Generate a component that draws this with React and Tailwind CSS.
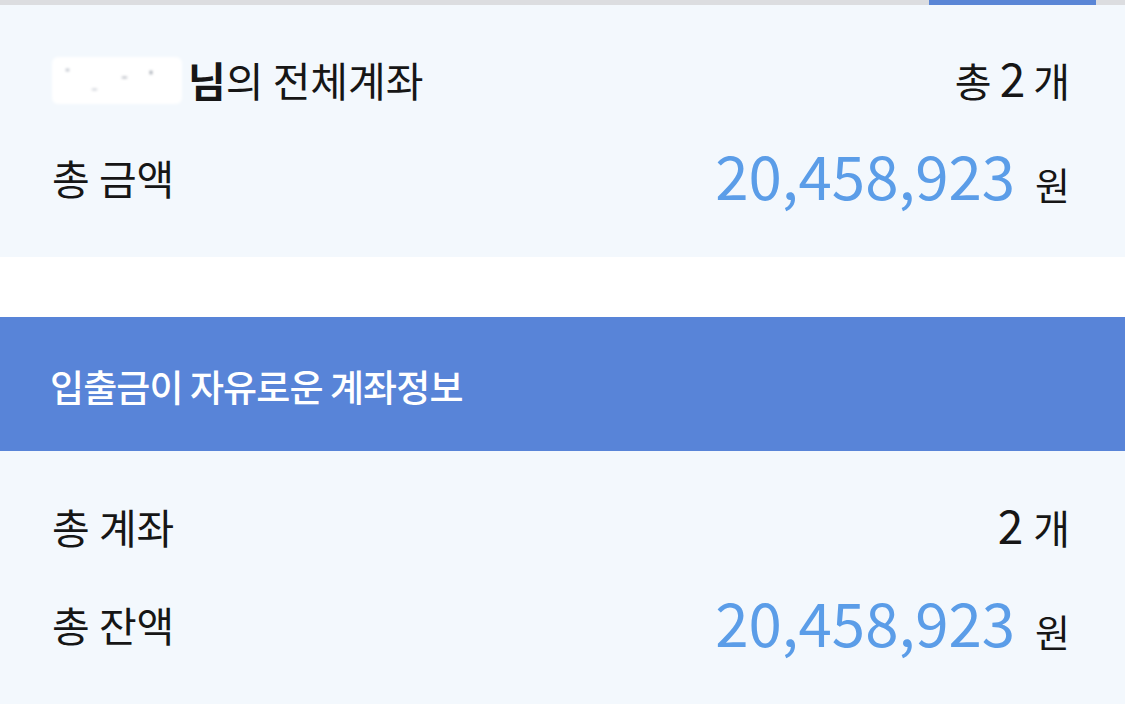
export default function App() {
  const font = { fontFamily: '"Noto Sans CJK KR", "Noto Sans", sans-serif' };
  return (
    <div className="w-[1125px] h-[721px] bg-white text-[#161616]" style={font}>
      <div className="h-[5px] bg-[#dcdde0] flex">
        <div className="ml-auto mr-[29px] w-[167px] h-[5px] bg-[#5a86d6]" />
      </div>
      <section className="h-[252px] bg-[#f3f8fd] pt-[40px] pl-[52px] pr-[55px] flex flex-col gap-[28px]">
        <div className="h-[70px] flex items-center justify-between">
          <div className="flex items-center text-[41px]">
            <div className="w-[130px] h-[47px] bg-white rounded-[6px] blur-[1.5px] mr-[6px] relative">
              <span className="absolute left-[14px] top-[12px] w-[3px] h-[2px] bg-gray-400" />
              <span className="absolute left-[70px] top-[20px] w-[5px] h-[1px] bg-gray-500" />
              <span className="absolute left-[40px] top-[32px] w-[5px] h-[1px] bg-gray-400" />
              <span className="absolute left-[98px] top-[14px] w-[2px] h-[3px] bg-gray-500" />
            </div>
            <span className="font-bold">님</span>
            <span>의 전체계좌</span>
          </div>
          <div className="flex items-baseline gap-[8px]">
            <span className="text-[40px]">총</span>
            <span className="text-[46px] leading-none">2</span>
            <span className="text-[40px]">개</span>
          </div>
        </div>
        <div className="h-[70px] flex items-center justify-between">
          <span className="text-[41px]">총 금액</span>
          <div className="flex items-baseline gap-[20px]">
            <span className="text-[60px] leading-none text-[#5b9de8]">20,458,923</span>
            <span className="text-[38px]">원</span>
          </div>
        </div>
      </section>
      <div className="h-[60px] bg-white" />
      <section className="h-[134px] bg-[#5884d8] pl-[50px] pt-[6px] flex items-center">
        <span className="text-[37px] font-medium text-white tracking-[-0.9px]">입출금이 자유로운 계좌정보</span>
      </section>
      <section className="h-[253px] bg-[#f3f8fd] pt-[41px] pl-[52px] pr-[55px] flex flex-col gap-[28px]">
        <div className="h-[70px] flex items-center justify-between">
          <span className="text-[41px]">총 계좌</span>
          <div className="flex items-baseline gap-[10px]">
            <span className="text-[46px] leading-none">2</span>
            <span className="text-[40px]">개</span>
          </div>
        </div>
        <div className="h-[70px] flex items-center justify-between">
          <span className="text-[41px]">총 잔액</span>
          <div className="flex items-baseline gap-[20px]">
            <span className="text-[60px] leading-none text-[#5b9de8]">20,458,923</span>
            <span className="text-[38px]">원</span>
          </div>
        </div>
      </section>
    </div>
  );
}
